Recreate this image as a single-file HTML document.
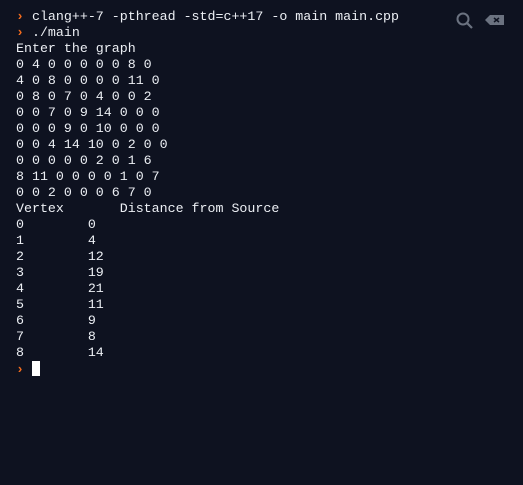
<!DOCTYPE html>
<html><head><style>
body{margin:0;width:523px;height:485px;background:#0e1220;overflow:hidden;}
pre{margin:0;position:absolute;left:16px;top:9px;font-family:"Liberation Mono",monospace;font-size:13.3px;line-height:16px;color:#eceff4;}
.p{color:#f26b1d;font-weight:bold;}
.cur{display:inline-block;width:8px;height:15px;background:#fff;vertical-align:-3px;}
</style></head><body>
<pre><span class="p">›</span> clang++-7 -pthread -std=c++17 -o main main.cpp
<span class="p">›</span> ./main
Enter the graph
0 4 0 0 0 0 0 8 0
4 0 8 0 0 0 0 11 0
0 8 0 7 0 4 0 0 2
0 0 7 0 9 14 0 0 0
0 0 0 9 0 10 0 0 0
0 0 4 14 10 0 2 0 0
0 0 0 0 0 2 0 1 6
8 11 0 0 0 0 1 0 7
0 0 2 0 0 0 6 7 0
Vertex       Distance from Source
0        0
1        4
2        12
3        19
4        21
5        11
6        9
7        8
8        14
<span class="p">›</span> <span class="cur"></span></pre>
<svg style="position:absolute;left:455px;top:11px" width="20" height="20" viewBox="0 0 20 20"><circle cx="8" cy="8" r="5.5" fill="none" stroke="#6b7280" stroke-width="2"/><line x1="12" y1="12" x2="17" y2="17" stroke="#6b7280" stroke-width="2.2"/></svg>
<svg style="position:absolute;left:485px;top:14px" width="20" height="12" viewBox="0 0 20 12"><path d="M5 1H19V11H5L0 6Z" fill="#6b7280"/><path d="M9 4L14 8M14 4L9 8" stroke="#0e1220" stroke-width="1.5"/></svg>
</body></html>
